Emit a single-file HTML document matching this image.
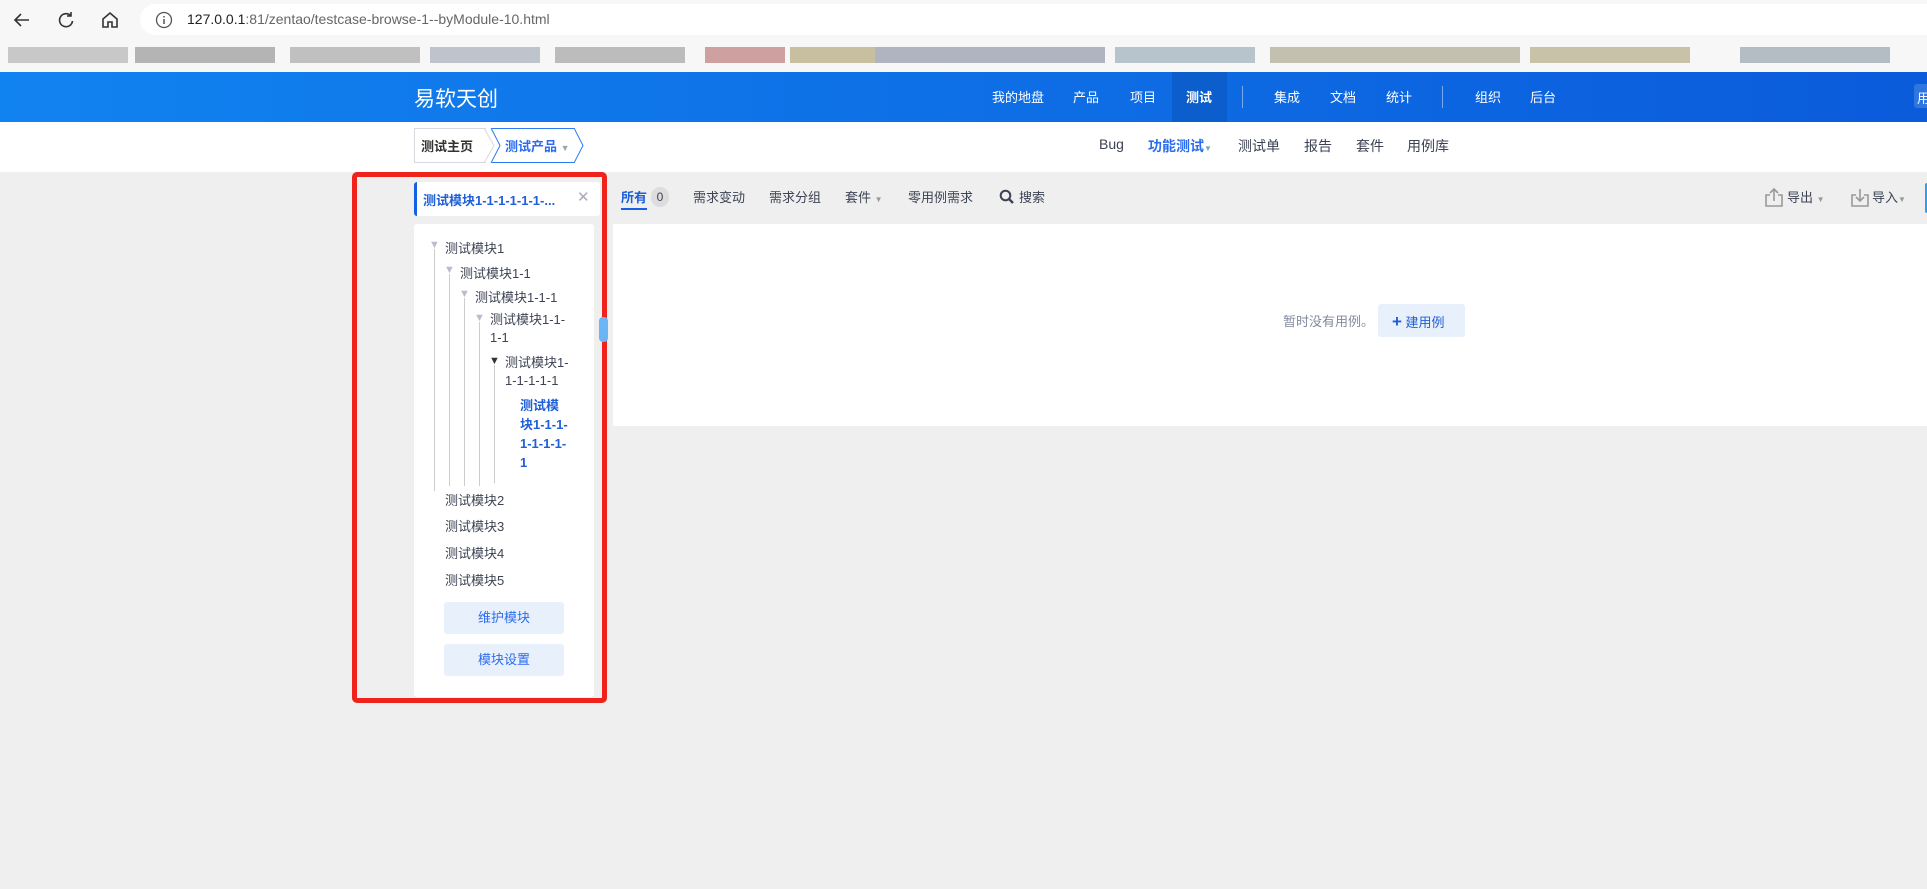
<!DOCTYPE html>
<html><head><meta charset="utf-8"><style>
*{margin:0;padding:0;box-sizing:border-box}
body{width:1927px;height:889px;overflow:hidden;background:#efefef;font-family:"Liberation Sans","Noto Sans CJK SC",sans-serif;font-size:13px;color:#3c4353;position:relative}
.a{position:absolute;white-space:nowrap}
.bm{position:absolute;top:47px;height:16px}
.c{font-size:11px;color:#bbc}
</style></head><body>
<div class="a" style="left:0;top:0;width:1927px;height:72px;background:#f7f7f7"></div>
<div class="a" style="left:140px;top:4px;width:1800px;height:31px;background:#fff;border-radius:16px"></div>
<svg class="a" style="left:12px;top:10px" width="20" height="20" viewBox="0 0 20 20"><path d="M17 10H3M9 4l-6 6 6 6" fill="none" stroke="#333" stroke-width="1.6"/></svg>
<svg class="a" style="left:56px;top:10px" width="20" height="20" viewBox="0 0 20 20"><path d="M15 6A6.5 6.5 0 1 0 16.5 11M15 2v4h-4" fill="none" stroke="#333" stroke-width="1.6"/></svg>
<svg class="a" style="left:100px;top:10px" width="20" height="20" viewBox="0 0 20 20"><path d="M3 9l7-6 7 6v8h-5v-5H8v5H3z" fill="none" stroke="#333" stroke-width="1.6"/></svg>
<svg class="a" style="left:155px;top:11px" width="18" height="18" viewBox="0 0 18 18"><circle cx="9" cy="9" r="7.5" fill="none" stroke="#555" stroke-width="1.3"/><path d="M9 8v5M9 5v1.5" stroke="#555" stroke-width="1.5"/></svg>
<div class="a" style="left:187px;top:11px;font-size:14px;color:#222">127.0.0.1<span style="color:#666">:81/zentao/testcase-browse-1--byModule-10.html</span></div>
<div class="bm" style="left:8px;width:120px;background:#c8c8c8"></div>
<div class="bm" style="left:135px;width:140px;background:#b4b4b4"></div>
<div class="bm" style="left:290px;width:130px;background:#c0c0c0"></div>
<div class="bm" style="left:430px;width:110px;background:#bfc4cc"></div>
<div class="bm" style="left:555px;width:130px;background:#bcbcbc"></div>
<div class="bm" style="left:705px;width:80px;background:#cfa0a0"></div>
<div class="bm" style="left:790px;width:110px;background:#c8bfa0"></div>
<div class="bm" style="left:875px;width:230px;background:#b0b4c0"></div>
<div class="bm" style="left:1115px;width:140px;background:#b8c4cc"></div>
<div class="bm" style="left:1270px;width:250px;background:#c4c0b0"></div>
<div class="bm" style="left:1530px;width:160px;background:#c8c2a8"></div>
<div class="bm" style="left:1740px;width:150px;background:#b4bcc4"></div>
<div class="a" style="left:0;top:72px;width:1927px;height:50px;background:linear-gradient(90deg,#1183f0,#0b5bdb)"></div>
<div class="a" style="left:414px;top:83px;font-size:21px;color:#fff">易软天创</div>
<div class="a" style="left:1172px;top:72px;width:55px;height:50px;background:#0b5ecb"></div>
<div class="a" style="left:1242px;top:86px;width:1px;height:22px;background:#7aa8ee"></div>
<div class="a" style="left:1442px;top:86px;width:1px;height:22px;background:#7aa8ee"></div>
<div class="a" style="top:87px;left:0;color:#fff;font-size:13px">
<span class="a" style="left:992px">我的地盘</span><span class="a" style="left:1073px">产品</span><span class="a" style="left:1130px">项目</span><span class="a" style="left:1186px;font-weight:bold">测试</span><span class="a" style="left:1274px">集成</span><span class="a" style="left:1330px">文档</span><span class="a" style="left:1386px">统计</span><span class="a" style="left:1475px">组织</span><span class="a" style="left:1530px">后台</span></div>
<div class="a" style="left:1914px;top:84px;width:20px;height:24px;background:#2f76e0;border-radius:3px;color:#fff;padding:4px 0 0 3px">用</div>
<div class="a" style="left:0;top:122px;width:1927px;height:50px;background:#fff"></div>
<div class="a" style="left:414px;top:128px;width:72px;height:35px;border:1px solid #d6d9de;border-right:none;font-weight:bold;padding:7px 0 0 6px;color:#333">测试主页</div>
<svg class="a" style="left:484px;top:128px" width="12" height="35"><path d="M0 0L10 17.5 0 35" fill="none" stroke="#d6d9de"/></svg>
<div class="a" style="left:492px;top:128px;width:82px;height:35px;border:1px solid #2b7cf0;border-right:none;border-left:none;color:#2b6cf0;font-weight:bold;padding:7px 0 0 13px">测试产品 <span style="color:#9aa;font-size:9px">▼</span></div>
<svg class="a" style="left:490px;top:128px" width="100" height="35"><path d="M1 0L10 17.5 1 35M84 0L93 17.5 84 35" fill="none" stroke="#2b7cf0"/></svg>
<div class="a" style="top:136px;left:0;font-size:14px;color:#3c4353">
<span class="a" style="left:1099px">Bug</span><span class="a" style="left:1148px;color:#2b6cf0;font-weight:bold">功能测试<span style="font-size:8px;color:#7aa">▼</span></span><span class="a" style="left:1238px">测试单</span><span class="a" style="left:1304px">报告</span><span class="a" style="left:1356px">套件</span><span class="a" style="left:1407px">用例库</span></div>
<div class="a" style="left:352px;top:172px;width:255px;height:531px;border:5px solid #f0221c;border-radius:5px"></div>
<div class="a" style="left:414px;top:182px;width:186px;height:34px;background:#fff;border-left:3px solid #1461e6;border-radius:3px;padding:8px 0 0 6px;font-weight:bold;color:#1f5fd8;font-size:13px">测试模块1-1-1-1-1-1-...</div>
<div class="a" style="left:577px;top:188px;color:#aab;font-size:15px">✕</div>
<div class="a" style="left:414px;top:224px;width:180px;height:473px;background:#fff;border-radius:3px"></div>
<div class="a" style="left:599px;top:317px;width:9px;height:25px;background:#6bb4f5;border-radius:4px"></div>
<div style="position:absolute;left:0;top:0;font-size:13px;color:#3c4353">
<div class="a" style="left:434px;top:249px;width:1px;height:242px;background:#ccc"></div>
<div class="a" style="left:449px;top:274px;width:1px;height:212px;background:#ccc"></div>
<div class="a" style="left:464px;top:298px;width:1px;height:188px;background:#ccc"></div>
<div class="a" style="left:479px;top:322px;width:1px;height:164px;background:#ccc"></div>
<div class="a" style="left:494px;top:365px;width:1px;height:118px;background:#ccc"></div>
<span class="a c" style="left:429px;top:239px">▼</span><span class="a" style="left:445px;top:238px">测试模块1</span>
<span class="a c" style="left:444px;top:264px">▼</span><span class="a" style="left:460px;top:263px">测试模块1-1</span>
<span class="a c" style="left:459px;top:288px">▼</span><span class="a" style="left:475px;top:287px">测试模块1-1-1</span>
<span class="a c" style="left:474px;top:312px">▼</span><span class="a" style="left:490px;top:311px;line-height:18px">测试模块1-1-<br>1-1</span>
<span class="a c" style="left:489px;top:355px;color:#333">▼</span><span class="a" style="left:505px;top:354px;line-height:18px">测试模块1-<br>1-1-1-1-1</span>
<span class="a" style="left:520px;top:396px;line-height:19px;color:#1f5fd8;font-weight:bold">测试模<br>块1-1-1-<br>1-1-1-1-<br>1</span>
<span class="a" style="left:445px;top:490px">测试模块2</span>
<span class="a" style="left:445px;top:516px">测试模块3</span>
<span class="a" style="left:445px;top:543px">测试模块4</span>
<span class="a" style="left:445px;top:570px">测试模块5</span>
</div>
<div class="a" style="left:444px;top:602px;width:120px;height:32px;background:#e8f0fb;border-radius:3px;color:#2b6cf0;text-align:center;line-height:32px">维护模块</div>
<div class="a" style="left:444px;top:644px;width:120px;height:32px;background:#e8f0fb;border-radius:3px;color:#2b6cf0;text-align:center;line-height:32px">模块设置</div>
<div style="position:absolute;left:0;top:187px;font-size:13px;color:#3c4353">
<span class="a" style="left:621px;color:#1f5fd8;font-weight:bold">所有</span>
<span class="a" style="left:651px;top:0px;width:18px;height:20px;background:#ddd;border-radius:9px;text-align:center;line-height:20px;font-size:12px">0</span>
<span class="a" style="left:693px">需求变动</span><span class="a" style="left:769px">需求分组</span><span class="a" style="left:845px">套件 <span style="font-size:8px;color:#999">▼</span></span><span class="a" style="left:908px">零用例需求</span><span class="a" style="left:1019px">搜索</span>
<span class="a" style="left:1787px">导出 <span style="font-size:8px;color:#999">▼</span></span><span class="a" style="left:1872px">导入<span style="font-size:8px;color:#999">▼</span></span>
</div>
<div class="a" style="left:621px;top:208px;width:26px;height:2px;background:#1461e6"></div>
<svg class="a" style="left:999px;top:189px" width="16" height="16" viewBox="0 0 16 16"><circle cx="6.5" cy="6.5" r="4.8" fill="none" stroke="#3c4353" stroke-width="2"/><path d="M10 10l4 4" stroke="#3c4353" stroke-width="2.4"/></svg>
<svg class="a" style="left:1764px;top:187px" width="20" height="20" viewBox="0 0 20 20"><path d="M6 8H2v11h16V8h-4M10 14V2M6 6l4-4 4 4" fill="none" stroke="#999" stroke-width="1.6"/></svg>
<svg class="a" style="left:1850px;top:187px" width="20" height="20" viewBox="0 0 20 20"><path d="M6 8H2v11h16V8h-4M10 2v12M6 10l4 4 4-4" fill="none" stroke="#999" stroke-width="1.6"/></svg>
<div class="a" style="left:1925px;top:183px;width:4px;height:30px;background:#2aa0f0;border-radius:3px"></div>
<div class="a" style="left:613px;top:224px;width:1314px;height:202px;background:#fff"></div>
<div class="a" style="left:1283px;top:311px;color:#838a9d;font-size:13px">暂时没有用例。</div>
<div class="a" style="left:1378px;top:304px;width:87px;height:33px;background:#e8f0fb;border-radius:3px;color:#1f5fd8;padding-top:8px;padding-left:14px;font-size:13px"><span style="font-size:17px;font-weight:bold;line-height:13px">+</span> 建用例</div>
</body></html>
